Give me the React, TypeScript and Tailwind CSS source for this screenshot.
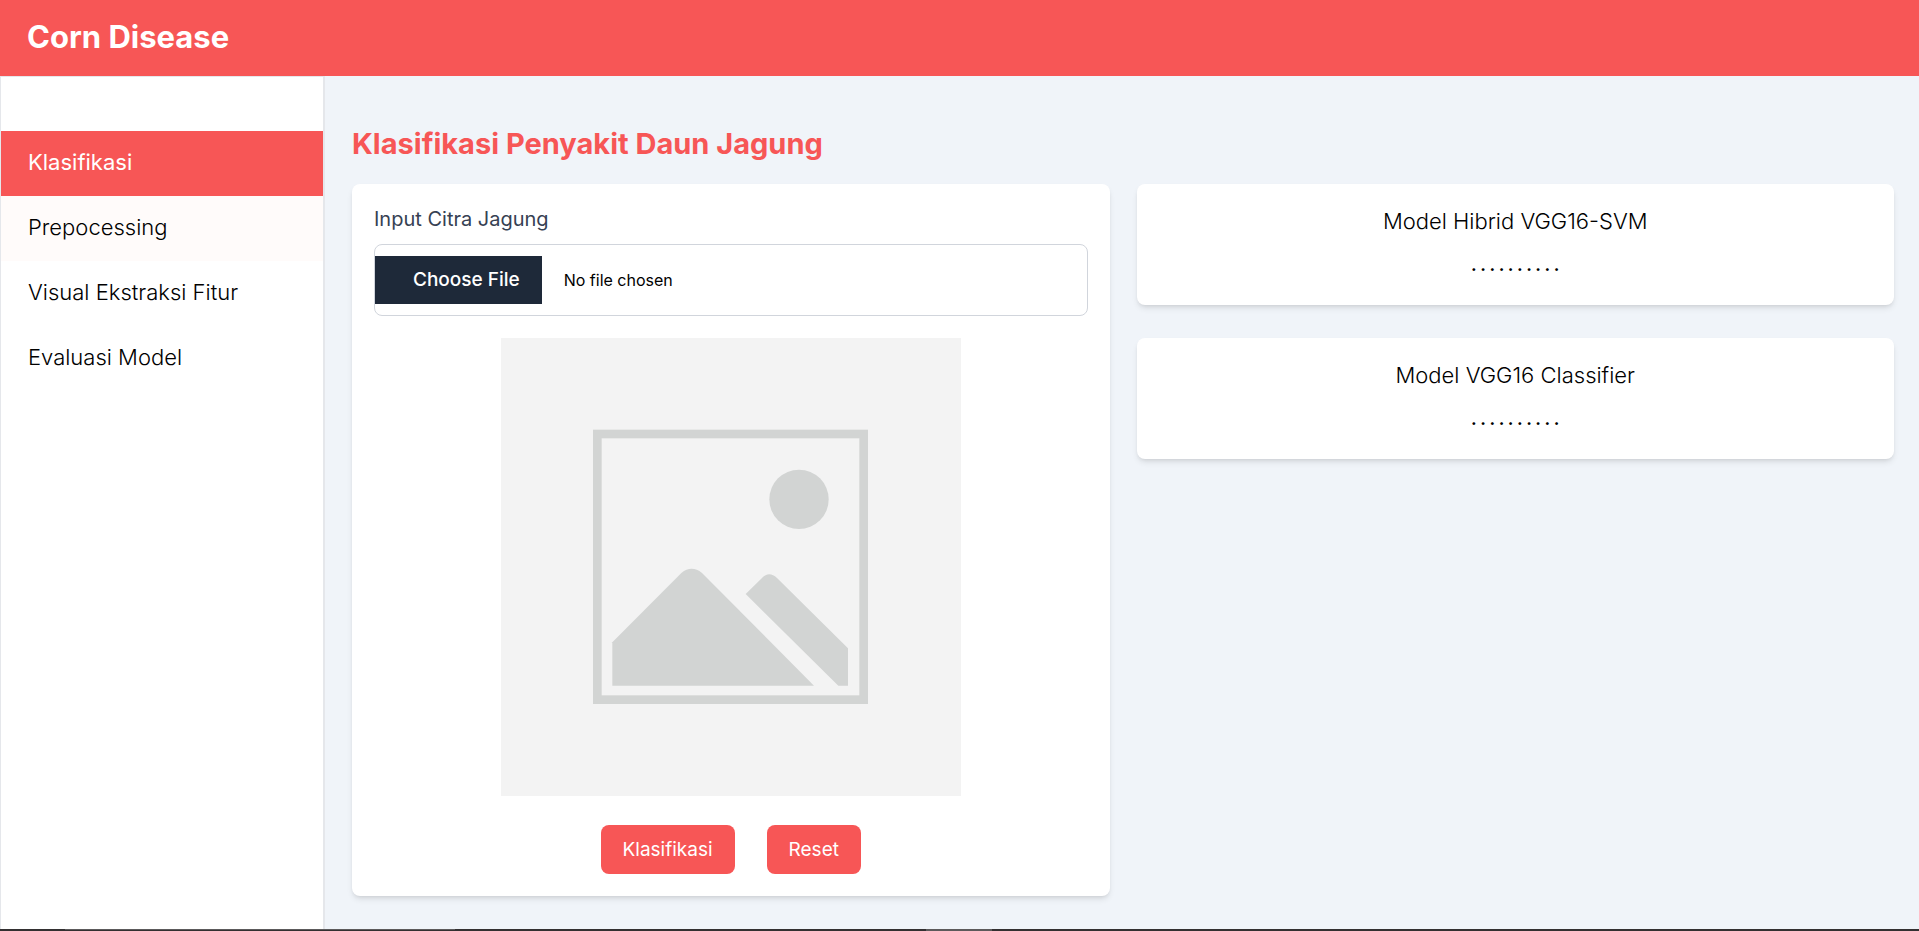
const navItems = [
  { label: "Klasifikasi", style: "bg-[#f75656] text-white font-normal" },
  { label: "Prepocessing", style: "bg-[#fffbfa] text-black font-light" },
  { label: "Visual Ekstraksi Fitur", style: "bg-white text-black font-light" },
  { label: "Evaluasi Model", style: "bg-white text-black font-light" },
];

const models = ["Model Hibrid VGG16-SVM", "Model VGG16 Classifier"];

function Placeholder() {
  return (
    <svg
      viewBox="0 0 1380 1374"
      className="block h-auto w-[460px] max-w-full"
      role="img"
      aria-label="Pratinjau citra"
    >
      <rect width="1380" height="1374" fill="#f3f3f3" />
      <rect x="289" y="288" width="799" height="797" fill="none" stroke="#d2d4d3" strokeWidth="26" />
      <g fill="#d2d4d3">
        <circle cx="894" cy="484" r="89" />
        <path d="M334 1043V913L541 705Q572 680 603 705L939 1043Z" />
        <path d="M734 768L783 720Q804 698 828 720L1041 931V1043H1012Z" />
      </g>
    </svg>
  );
}

function ModelCard({ title }: { title: string }) {
  return (
    <section className="flex h-[121px] flex-col items-center rounded-lg bg-white pt-[22px] text-black shadow-md">
      <h2 className="text-[22px] leading-[30px] font-light">{title}</h2>
      <p className="mt-4 text-[17px] leading-[27px] font-bold">. . . . . . . . . .</p>
    </section>
  );
}

export default function App() {
  return (
    <div className="flex min-h-screen flex-col bg-[#f0f4f9] font-['Inter','Open_Sans',sans-serif]">
      <header className="flex h-[76px] items-center bg-[#f75656] px-[27px] pb-[2px]">
        <span className="text-[31px] leading-[40px] font-bold text-white">Corn Disease</span>
      </header>

      <div className="flex flex-1">
        <aside className="w-[325px] shrink-0 border-t border-r-2 border-l border-gray-200 bg-white pt-[54px]">
          <nav className="flex flex-col">
            {navItems.map((item) => (
              <a
                key={item.label}
                href="#"
                className={`flex h-[65px] items-center px-[27px] pb-[3px] text-[22px] leading-[30px] ${item.style}`}
              >
                {item.label}
              </a>
            ))}
          </nav>
        </aside>

        <main className="min-w-0 flex-1 pt-[50px] pr-[25px] pb-[33px] pl-[27px]">
          <h1 className="text-[29px] leading-[36px] font-bold text-[#f75656]">
            Klasifikasi Penyakit Daun Jagung
          </h1>

          <div className="mt-[22px] grid grid-cols-2 items-start gap-[27px]">
            <form className="rounded-lg bg-white p-[22px] shadow-md">
              <label htmlFor="citra" className="block text-[20px] leading-[27px] text-gray-700">
                Input Citra Jagung
              </label>
              <input
                id="citra"
                type="file"
                className="mt-[11px] block w-full rounded-lg border border-gray-300 py-[11px] text-[16px] text-black file:mr-[22px] file:h-[48px] file:bg-gray-800 file:pr-[22px] file:pl-[38px] file:text-[19px] file:font-medium file:text-white"
              />
              <div className="mt-[22px] flex justify-center">
                <Placeholder />
              </div>
              <div className="mt-[29px] flex justify-center gap-8">
                <button
                  type="button"
                  className="h-[49px] rounded-lg bg-[#f75656] px-[22px] text-[19px] leading-[27px] text-white"
                >
                  Klasifikasi
                </button>
                <button
                  type="reset"
                  className="h-[49px] rounded-lg bg-[#f75656] px-[22px] text-[19px] leading-[27px] text-white"
                >
                  Reset
                </button>
              </div>
            </form>

            <div className="flex flex-col gap-[33px]">
              {models.map((title) => (
                <ModelCard key={title} title={title} />
              ))}
            </div>
          </div>
        </main>
      </div>

      <footer className="flex h-[2px] bg-[#333031]">
        <div className="w-[65px]" />
        <div className="w-[390px] border-t border-[#5c5a5b]" />
        <div className="w-[471px]" />
        <div className="w-[66px] bg-[#5c5a5b]" />
      </footer>
    </div>
  );
}
